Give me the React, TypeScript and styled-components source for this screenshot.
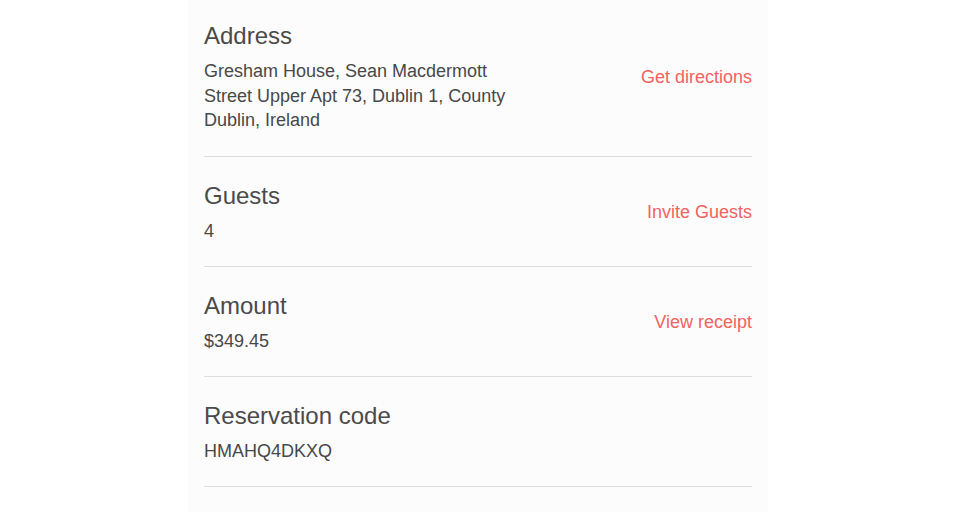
import React from "react";
import styled, { createGlobalStyle } from "styled-components";

const Global = createGlobalStyle`
  html, body { margin: 0; padding: 0; background: #ffffff; }
  body { font-family: "Liberation Sans", Arial, sans-serif; color: #484848; overflow: hidden; }
`;

const Page = styled.div`
  display: flex;
  justify-content: center;
  padding-right: 15px;
  height: 512px;
`;

const Panel = styled.div`
  width: 548px;
  padding: 0 16px;
  background: #fcfcfc;
  margin-top: -3px;
  height: 520px;
`;

const Row = styled.div`
  display: flex;
  align-items: center;
  justify-content: space-between;
  padding: 24px 0 23px;
  border-bottom: 1px solid #dedede;
`;

const Info = styled.div`
  display: flex;
  flex-direction: column;
  max-width: 320px;
`;

const Title = styled.div`
  font-size: 24px;
  line-height: 30px;
  font-weight: 400;
  color: #4a4a4a;
`;

const Value = styled.div<{ $multi?: boolean }>`
  margin-top: 8px;
  font-size: 18px;
  line-height: ${(p) => (p.$multi ? "24.5px" : "24px")};
  color: #484848;
`;

const Action = styled.a`
  font-size: 18px;
  line-height: 24px;
  color: #f2625f;
  text-decoration: none;
  cursor: pointer;
`;

const rows = [
  {
    title: "Address",
    value: "Gresham House, Sean Macdermott Street Upper Apt 73, Dublin 1, County Dublin, Ireland",
    action: "Get directions",
    multi: true,
  },
  { title: "Guests", value: "4", action: "Invite Guests" },
  { title: "Amount", value: "$349.45", action: "View receipt" },
  { title: "Reservation code", value: "HMAHQ4DKXQ" },
];

export default function App() {
  return (
    <>
      <Global />
      <Page>
        <Panel>
          {rows.map((r) => (
            <Row key={r.title}>
              <Info>
                <Title>{r.title}</Title>
                <Value $multi={r.multi}>{r.value}</Value>
              </Info>
              {r.action && <Action>{r.action}</Action>}
            </Row>
          ))}
        </Panel>
      </Page>
    </>
  );
}
